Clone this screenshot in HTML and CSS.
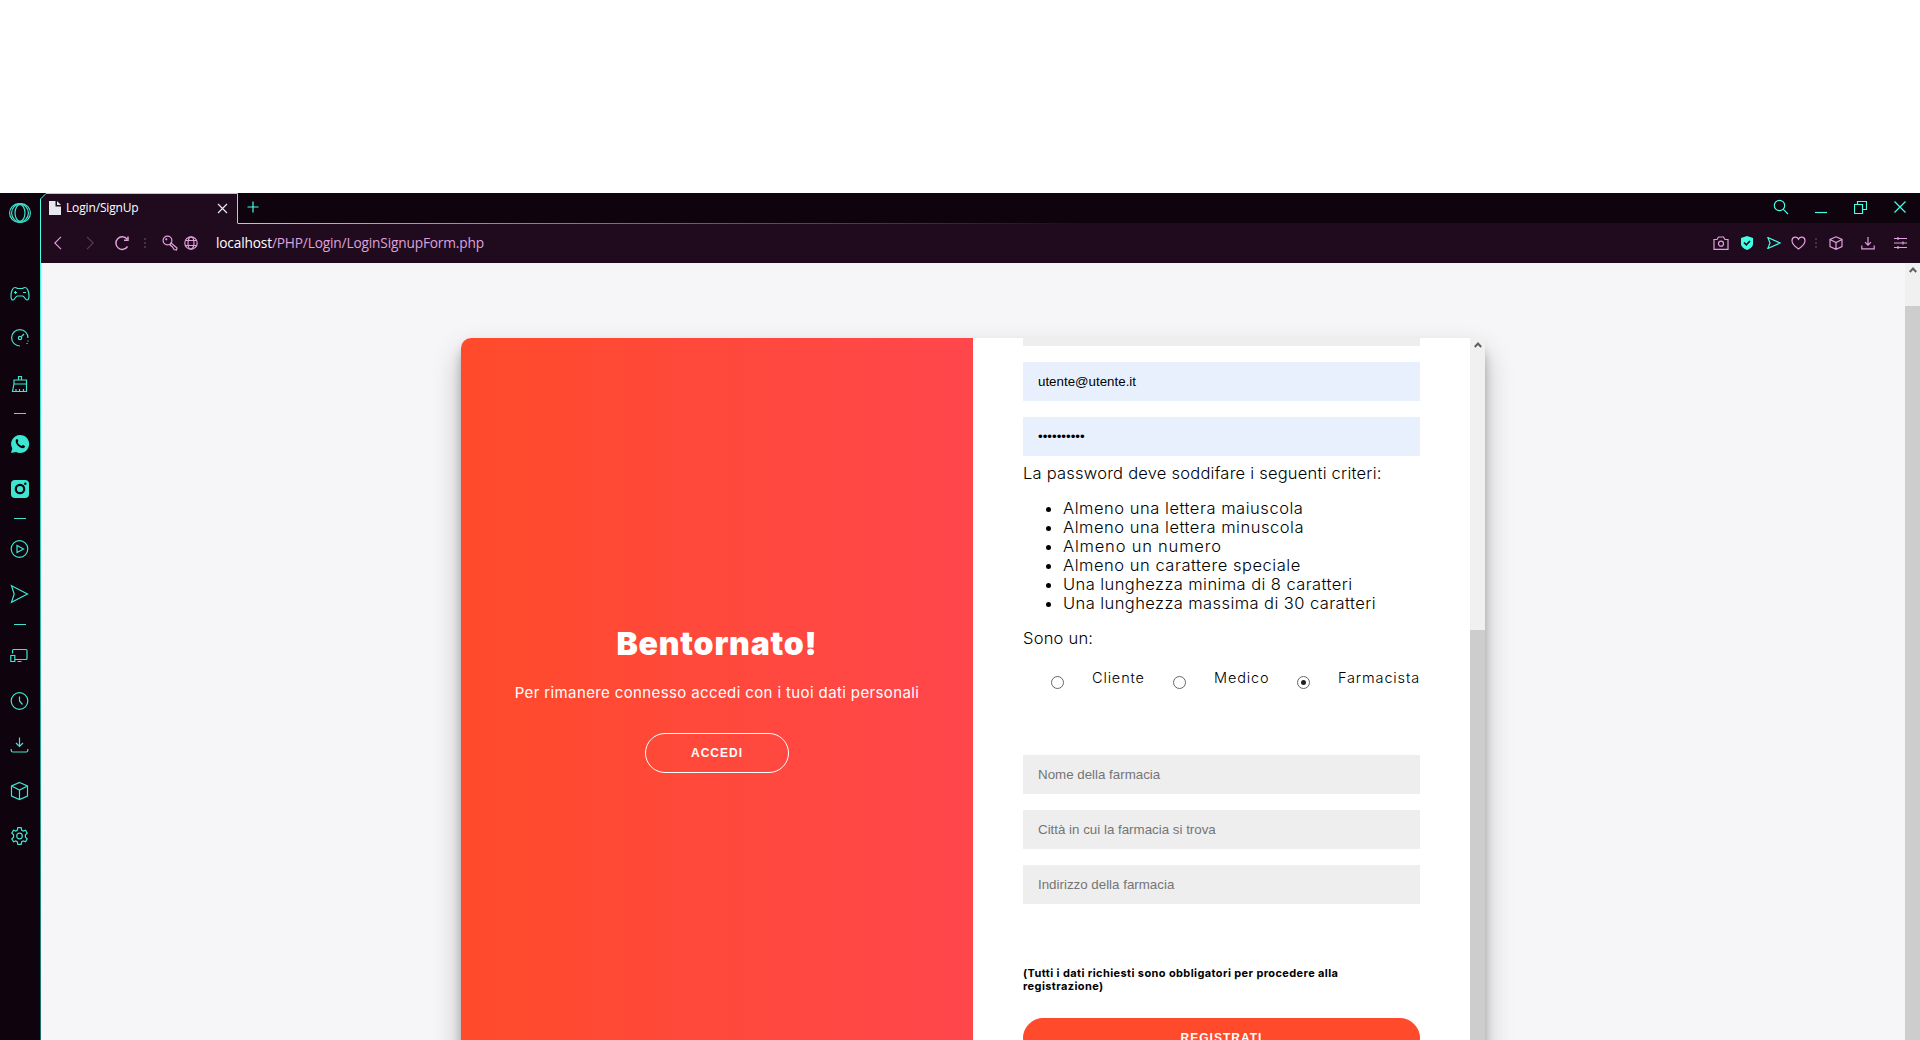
FILE: index.html
```html
<!DOCTYPE html>
<html lang="it">
<head>
<meta charset="utf-8">
<title>Login/SignUp</title>
<link rel="stylesheet" href="styles.css">
</head>
<body>
<div class="browser">
  <nav class="sidebar">
    <div class="logo"><svg width="22" height="22" viewBox="0 0 22 22"><circle cx="10" cy="11" r="9.400"/><circle cx="12" cy="11" r="9.400"/><ellipse cx="11" cy="11" rx="5" ry="8.300"/></svg></div>
    <div class="slot"><svg width="20" height="16" viewBox="0 0 20 16"><path d="M5 1.500c1.500 0 1.800 1 2.800 1h4.400c1 0 1.300-1 2.800-1 2.500 0 4 4.500 4 8.500 0 3-.8 4-2 4-1.800 0-2.600-4-4.500-4h-5c-1.900 0-2.700 4-4.500 4-1.200 0-2-1-2-4 0-4 1.500-8.500 4-8.500zM5.500 5v3M4 6.500h3M13 6.500h3"/></svg></div>
    <div class="slot raised"><svg width="20" height="20" viewBox="0 0 20 20"><path d="M10 18a8.200 8.200 0 1 1 8-8M18 12.500v1M17 15v1M11.500 8.500 14 6"/><circle cx="10" cy="10" r="1.700"/></svg></div>
    <div class="slot"><svg width="18" height="18" viewBox="0 0 18 18"><path d="M7.500 5V1.500h3V5M3 5h12.500v4H3zM3 9l-1.500 7.500h14V9M5 16.500V14M8.500 16.500V14M12.500 16.500V14"/></svg></div>
    <div class="divider"></div>
    <div class="slot"><svg class="solid" width="20" height="20" viewBox="0 0 20 20"><path d="M10 1a9 9 0 1 1-4 17L1 19l1.300-4.500A9 9 0 0 1 10 1z"/><path class="dark" d="M6 5.500c1-1 1.700-.5 2 .5.5 1.300.3 1.500-.4 2.300.8 1.700 2.200 3 4 3.700.9-1 1.200-1.200 2.300-.6 1.500.8 1.300 1.300.6 2.200-2.500 2.600-10.500-3.500-8.500-8.100z"/></svg></div>
    <div class="slot"><svg class="solid" width="20" height="20" viewBox="0 0 20 20"><rect x="1" y="1" width="18" height="18" rx="4"/><circle class="ring" cx="10" cy="10" r="4.200"/><circle class="dark" cx="15.300" cy="4.800" r="1.200"/></svg></div>
    <div class="divider"></div>
    <div class="slot"><svg width="20" height="20" viewBox="0 0 20 20"><circle cx="9.500" cy="10" r="8.300"/><path d="M7 6.500v7l6.500-3.500z"/></svg></div>
    <div class="slot tall"><svg width="20" height="20" viewBox="0 0 20 20"><path d="M1.500 1.800 17.500 10 1.500 18.200 4.200 10z"/></svg></div>
    <div class="divider"></div>
    <div class="slot tall"><svg width="20" height="16" viewBox="0 0 20 16"><path d="M2.500 6.500V4.500q0-2 1-2h12.500q1 0 1 1v8q0 1-1 1H5M7.500 14.500h4M.8 8.500h4v6h-4z"/></svg></div>
    <div class="slot"><svg width="20" height="20" viewBox="0 0 20 20"><circle cx="9.500" cy="10" r="8.300"/><path d="M9.500 5.500V10l3 3.500"/></svg></div>
    <div class="slot raised"><svg width="20" height="18" viewBox="0 0 20 18"><path d="M9.500 1.500v9M6 7l3.500 3.500L13 7M1.200 13v1.500q0 1.500 1.500 1.500h13.600q1.500 0 1.500-1.500V13"/></svg></div>
    <div class="slot"><svg width="20" height="20" viewBox="0 0 20 20"><path d="M9.500 1.500 17.500 5v10l-8 3.500L1.500 15V5zM1.500 5l8 4 8-4M9.500 9v9.500"/></svg></div>
    <div class="slot"><svg width="20" height="20" viewBox="0 0 20 20"><path d="M7.800 1.700h3.400l.4 2.300 1.700 1 2.200-.8 1.700 2.900L15.400 8.700v2.600l1.800 1.600-1.700 2.900-2.200-.8-1.700 1-.4 2.300H7.800L7.400 16l-1.700-1-2.200.8-1.700-2.900 1.800-1.600V8.700L1.800 7.100 3.500 4.200l2.200.8 1.700-1z"/><circle cx="9.500" cy="10" r="2.800"/></svg></div>
  </nav>
  <div class="window">
    <header class="tabs">
      <svg class="outline" width="198" height="31" viewBox="0 0 198 31"><path class="fill" d="M.5 31V6L6 .5h191.500V31z"/><path d="M.5 31V6L6 .5h191.500v30"/></svg>
      <div class="tab">
        <svg class="file" width="12" height="14" viewBox="0 0 12 14"><path d="M0 0h6.500v5.500H12V14H0zM8 0l4 4H8z"/></svg>
        <span class="title">Login/SignUp</span>
        <svg class="x" width="11" height="11" viewBox="0 0 11 11"><path d="m1 1 9 9M10 1l-9 9"/></svg>
      </div>
      <div class="strip">
        <svg width="12" height="12" viewBox="0 0 12 12"><path d="M6 .5v11M.5 6h11"/></svg>
        <div class="controls">
          <svg width="16" height="16" viewBox="0 0 16 16"><circle cx="6.500" cy="6.500" r="5.200"/><path d="m10.300 10.300 4.700 4.700"/></svg>
          <svg width="12" height="14" viewBox="0 0 12 14"><path d="M0 12.500h12"/></svg>
          <svg width="13" height="13" viewBox="0 0 13 13"><path d="M.5 3.500h8v9h-8zM3.500 3.500v-3h9v8h-4"/></svg>
          <svg width="12" height="12" viewBox="0 0 12 12"><path d="m.5.5 11 11M11.500.5l-11 11"/></svg>
        </div>
      </div>
    </header>
    <div class="address">
      <div class="navicons">
        <svg width="8" height="14" viewBox="0 0 8 14"><path d="M7 .8.800 7 7 13.200"/></svg>
        <svg class="faint" width="8" height="14" viewBox="0 0 8 14"><path d="M1 .8 7.200 7 1 13.200"/></svg>
        <svg class="bold" width="16" height="16" viewBox="0 0 16 16"><path d="M13.500 11.500A6.300 6.300 0 1 1 13 4M14 1.500V5.300h-4"/></svg>
        <svg class="dots" width="2" height="12" viewBox="0 0 2 12"><path d="M0 2h2M0 6h2M0 10h2"/></svg>
        <svg width="16" height="16" viewBox="0 0 16 16"><circle cx="5.500" cy="5.500" r="4.400"/><circle cx="4.300" cy="4.300" r=".5"/><path d="m9 8 6 5-.5 2-2.500-.5L10.500 12 8 10z"/></svg>
        <svg width="14" height="14" viewBox="0 0 14 14"><circle cx="7" cy="7" r="6.200"/><ellipse cx="7" cy="7" rx="3" ry="6.200"/><path d="M1.500 4.500h11M1.500 9.500h11"/></svg>
      </div>
      <div class="url"><b>localhost</b>/PHP/Login/LoginSignupForm.php</div>
      <div class="tools">
        <svg width="16" height="14" viewBox="0 0 16 14"><path d="M1 3.500h3l1.500-2.500h5L12 3.500h3v9.800H1z"/><circle cx="8" cy="7.700" r="2.500"/></svg>
        <svg class="shield" width="12" height="14" viewBox="0 0 12 14"><path d="M6 0l6 2v6q0 3.500-6 6-6-2.500-6-6V2z"/><path class="check" d="m3 6.500 2.300 2.300L9 5"/></svg>
        <svg class="teal" width="14" height="12" viewBox="0 0 14 12"><path d="M.8.500 13 6 .8 11.500 3 6z"/></svg>
        <svg width="15" height="14" viewBox="0 0 15 14"><path d="M7.500 13Q1 8.500 1 4.700C1 .5 6 0 7.500 3.200 9 0 14 .5 14 4.700q0 3.800-6.500 8.300z"/></svg>
        <svg class="dots" width="2" height="12" viewBox="0 0 2 12"><path d="M0 2h2M0 6h2M0 10h2"/></svg>
        <svg width="14" height="14" viewBox="0 0 14 14"><path d="M7 .8 13 3.500v7L7 13.300 1 10.500v-7zM1 3.500l6 3 6-3M7 6.500v6.800"/></svg>
        <svg width="14" height="14" viewBox="0 0 14 14"><path d="M7 1v8M4 6.200l3 3 3-3M.8 9.500v3.300h12.400V9.500"/></svg>
        <svg width="13" height="12" viewBox="0 0 13 12"><path d="M0 1.500h13M0 6h13M0 10.500h13M4 0v3M9 4.500v3M4 9v3"/></svg>
      </div>
    </div>
    <div class="viewport">
      <main class="page">
        <div class="card">
          <section class="welcome">
            <h1>Bentornato!</h1>
            <p>Per rimanere connesso accedi con i tuoi dati personali</p>
            <button>ACCEDI</button>
          </section>
          <section class="signup">
            <div class="field sliver"></div>
            <div class="field filled">utente@utente.it</div>
            <div class="field filled secret">••••••••••</div>
            <p class="rule">La password deve soddifare i seguenti criteri:</p>
            <ul>
              <li>Almeno una lettera maiuscola</li>
              <li>Almeno una lettera minuscola</li>
              <li class="wide">Almeno un numero</li>
              <li>Almeno un carattere speciale</li>
              <li class="narrow">Una lunghezza minima di 8 caratteri</li>
              <li class="narrow">Una lunghezza massima di 30 caratteri</li>
            </ul>
            <p class="rule">Sono un:</p>
            <div class="choices">
              <i class="radio"></i><label class="cliente">Cliente</label>
              <i class="radio"></i><label class="medico">Medico</label>
              <i class="radio on"></i><label class="farmacista">Farmacista</label>
            </div>
            <div class="field">Nome della farmacia</div>
            <div class="field">Città in cui la farmacia si trova</div>
            <div class="field">Indirizzo della farmacia</div>
            <p class="note">(Tutti i dati richiesti sono obbligatori per procedere alla<br>registrazione)</p>
            <button class="primary">REGISTRATI</button>
          </section>
          <div class="scroll inner"><svg width="8" height="6" viewBox="0 0 8 6"><path d="M.8 5 4 1.500 7.200 5"/></svg><div class="thumb"></div></div>
        </div>
      </main>
      <div class="scroll"><svg width="8" height="6" viewBox="0 0 8 6"><path d="M.8 5 4 1.500 7.200 5"/></svg><div class="thumb"></div></div>
    </div>
  </div>
</div>
</body>
</html>
```
FILE: styles.css
```css
* { box-sizing: border-box; }
body { margin: 0; height: 1040px; overflow: hidden; background: #fff; padding-top: 193px; font-family: Inter, "Liberation Sans", sans-serif; }
svg { display: block; fill: none; stroke: currentColor; stroke-width: 1.2; flex: none; }
.browser { display: flex; height: 847px; background: #0f030d; }

.sidebar { width: 40px; color: #3de6d0; display: flex; flex-direction: column; align-items: center; }
.logo { height: 78px; padding-top: 9px; }
.slot { height: 45px; display: flex; align-items: center; }
.slot.tall { height: 46px; }
.slot.raised { padding-bottom: 2px; }
.divider { height: 15px; width: 12px; display: flex; align-items: center; }
.divider::before { content: ""; width: 12px; height: 1px; background: currentColor; }
.solid { fill: currentColor; stroke: none; }
.dark { fill: #0f030d; }
.ring { fill: none; stroke: #0f030d; stroke-width: 2.2; }

.window { width: 1880px; display: flex; flex-direction: column; }
.tabs { height: 31px; display: flex; position: relative; color: #43ffe3; }
.outline { position: absolute; left: 0; top: 0; stroke-width: 1; }
.outline .fill { fill: #200b1e; stroke: none; }
.tab { width: 198px; position: relative; display: flex; align-items: center; padding: 0 10px 1px 9px; color: #e9e9f2; }
.file { fill: #e6e8ee; stroke: none; }
.title { margin-left: 5px; font: 12px/16px "Open Sans", sans-serif; letter-spacing: -.15px; color: #fff; }
.x { margin-left: auto; }
.strip { flex: 1; display: flex; align-items: center; justify-content: space-between; padding: 0 14px 2px 9px; border-bottom: 1px solid; border-image: linear-gradient(90deg, #43ffe3, #200b1e 50%) 1; }
.controls { display: flex; align-items: center; gap: 27px; }
.controls svg:first-child { margin-right: -1px; }

.address { height: 39px; background: #200b1e; border-left: 1px solid #43ffe3; color: #dfa0dc; display: flex; align-items: center; padding-bottom: 1px; }
.navicons { width: 175px; display: flex; align-items: center; padding-left: 13px; }
.navicons svg:nth-child(2) { margin-left: 24px; }
.navicons svg:nth-child(3) { margin-left: 20px; }
.navicons svg:nth-child(4) { margin-left: 14px; }
.navicons svg:nth-child(5) { margin-left: 16px; }
.navicons svg:nth-child(6) { margin-left: 6px; }
.faint { color: #5b3a59; }
.dots { color: #43304a; stroke-width: 2; }
.bold { stroke-width: 1.5; }
.url { font: 13.7px/20px "Open Sans", sans-serif; letter-spacing: -.16px; }
.url b { color: #fff; font-weight: 400; }
.tools { margin-left: auto; display: flex; align-items: center; padding-right: 13px; }
.tools svg:nth-child(2) { margin-left: 12px; }
.tools svg:nth-child(3) { margin-left: 14px; }
.tools svg:nth-child(4) { margin-left: 10px; }
.tools svg:nth-child(5) { margin-left: 9px; }
.tools svg:nth-child(6) { margin-left: 12px; }
.tools svg:nth-child(7) { margin-left: 18px; }
.tools svg:nth-child(8) { margin-left: 19px; }
.shield { fill: #43ffe3; stroke: none; }
.shield .check { fill: none; stroke: #200b1e; stroke-width: 1.7; }
.teal { color: #43ffe3; }

.viewport { height: 777px; display: flex; border-left: 1px solid; border-image: linear-gradient(#43ffe3, #1c6e66) 1; background: #f6f5f7; }
.page { flex: 1; overflow: hidden; padding: 75px 0 0 420px; }
.scroll { width: 15px; background: #f0f0f0; display: flex; flex-direction: column; align-items: center; color: #606060; padding-top: 4px; }
.scroll svg { stroke-width: 2; }
.thumb { width: 100%; flex: 1; background: #cdcdcd; margin-top: 33px; }
.inner .thumb { margin-top: 282px; }

.card { width: 1024px; height: 800px; display: flex; border-radius: 10px; overflow: hidden; background: #fff; box-shadow: 0 14px 28px rgba(0,0,0,.25), 0 10px 10px rgba(0,0,0,.22); }
.welcome { width: 512px; background: linear-gradient(90deg, #ff4b2b, #ff464c); color: #fff; display: flex; flex-direction: column; align-items: center; padding-top: 286px; }
h1 { margin: 0; font-size: 32px; line-height: 40px; font-weight: 900; letter-spacing: .8px; white-space: nowrap; }
.welcome p { margin: 19px 0 0; font-size: 15px; line-height: 20px; letter-spacing: .38px; white-space: nowrap; font-weight: 400; }
button { margin: 30px 0 0; width: 144px; height: 40px; border: 1px solid #fff; border-radius: 20px; background: none; color: #fff; padding: 0; font: bold 12px/16px "Liberation Sans", sans-serif; letter-spacing: 1px; }
.signup { width: 497px; padding: 0 50px; display: flex; flex-direction: column; }
.field { height: 39px; flex: none; background: #eee; color: #757575; font: 13.333px/39px "Liberation Sans", sans-serif; padding: 0 15px; margin-bottom: 16px; }
.field.sliver { height: 8px; }
.filled { background: #e8f0fe; color: #000; }
.secret { margin-bottom: 8px; }
.rule { margin: 0; font-size: 16.5px; line-height: 19px; font-weight: 300; letter-spacing: .23px; white-space: nowrap; }
ul { margin: 16px 0; padding-left: 40px; font-size: 16.5px; line-height: 19px; font-weight: 300; letter-spacing: .53px; white-space: nowrap; }
.wide { letter-spacing: .8px; }
.narrow { letter-spacing: .42px; }
.choices { display: flex; height: 87px; margin-top: 20px; font-size: 14.5px; line-height: 20px; font-weight: 300; letter-spacing: .85px; }
.choices label { margin-left: 28px; }
.radio { width: 13px; height: 13px; border: 1px solid #666; border-radius: 50%; margin: 8px 0 0 28px; flex: none; display: flex; align-items: center; justify-content: center; }
.cliente { width: 53px; }
.medico { width: 55px; }
.on::before { content: ""; width: 5px; height: 5px; border-radius: 50%; background: #222; }
.note { margin: 47px 0 0; font-size: 11px; line-height: 13px; font-weight: 700; letter-spacing: .39px; white-space: nowrap; }
.primary { width: 397px; flex: none; margin-top: 25px; background: #ff4b2b; border-color: #ff4b2b; }
```
